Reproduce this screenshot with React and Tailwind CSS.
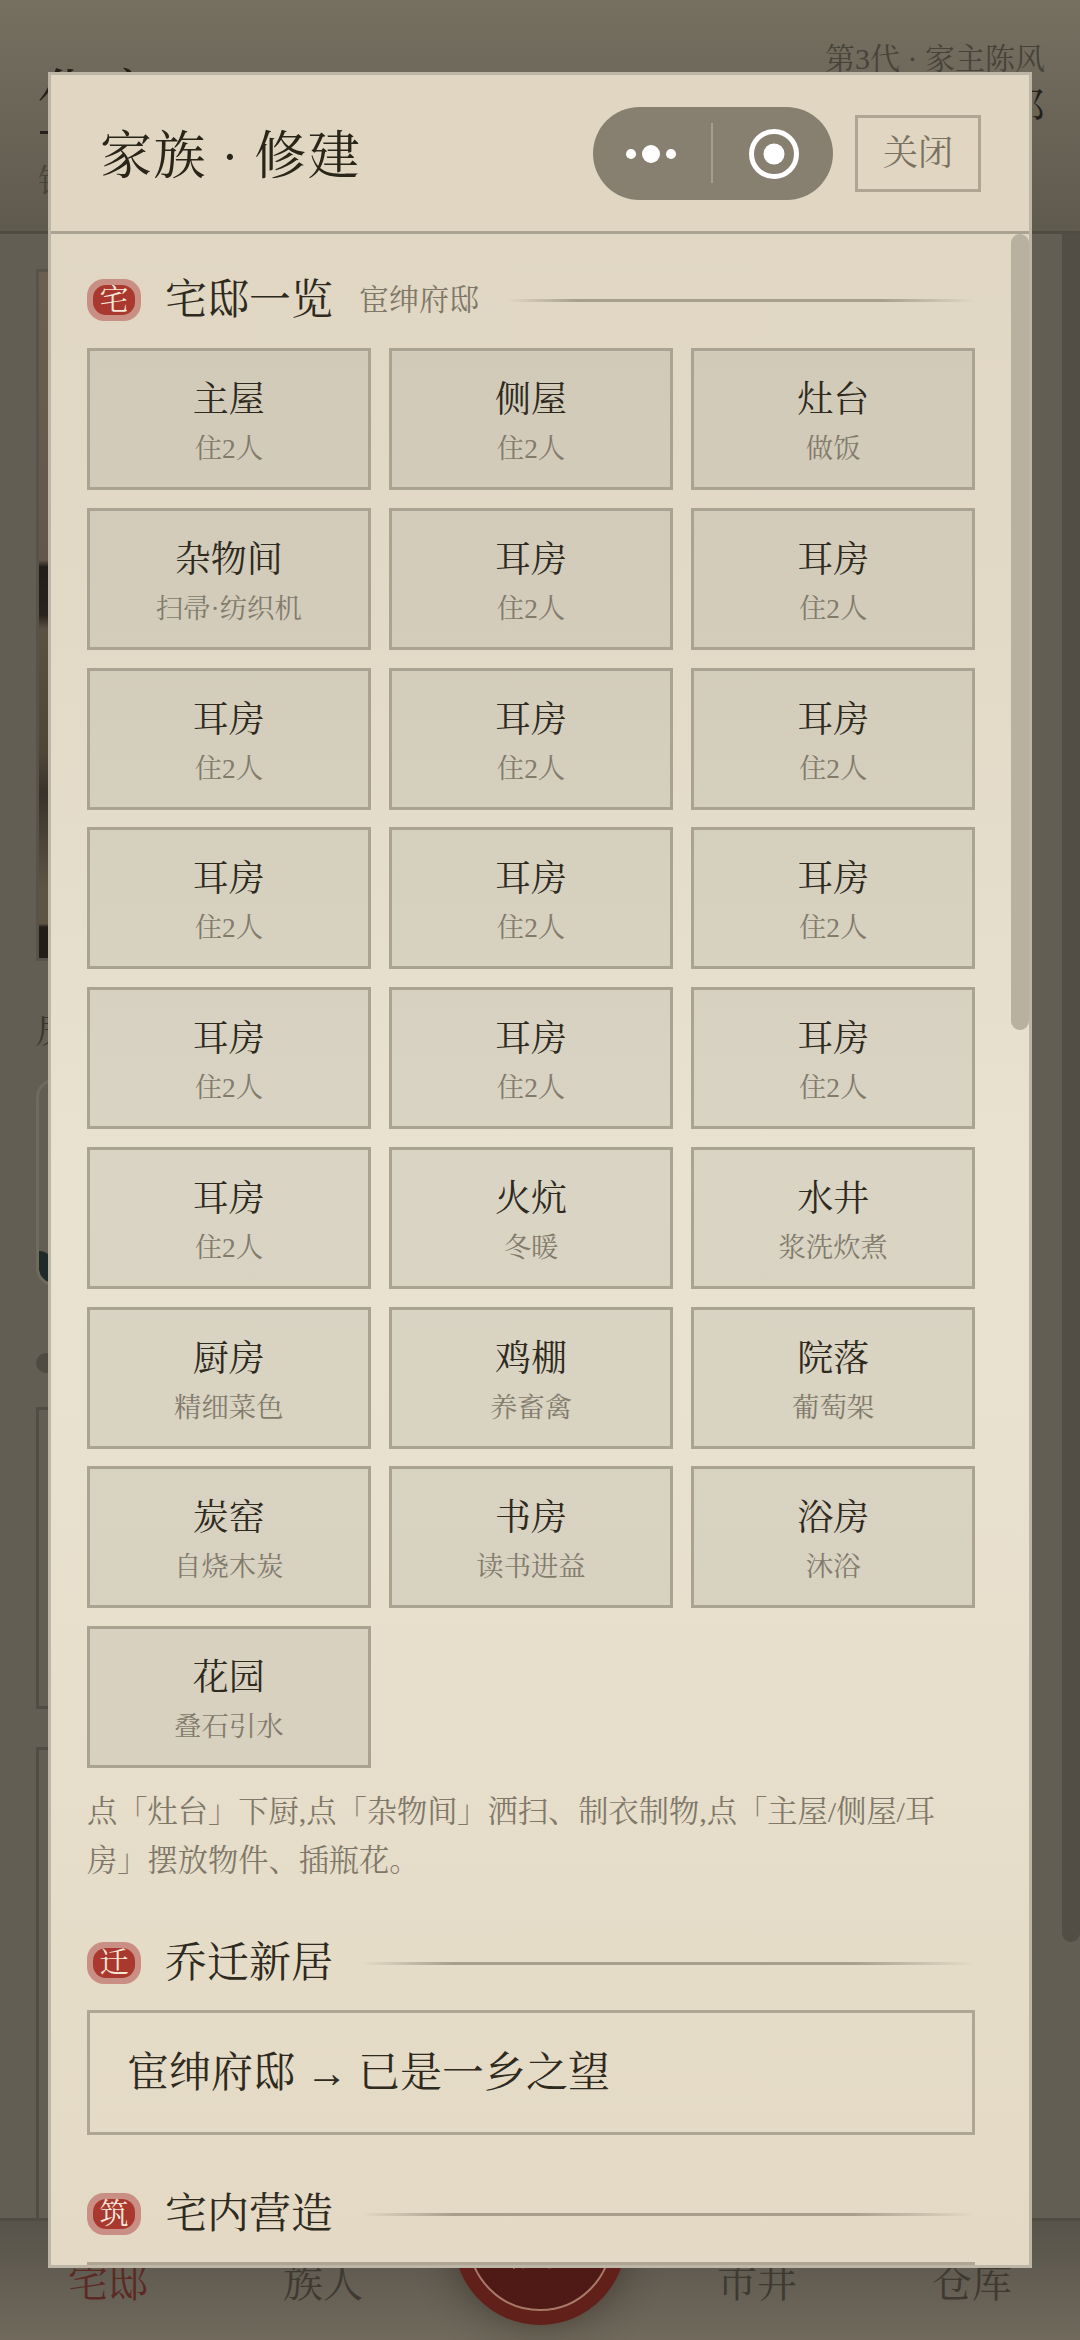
const SERIF = 'font-["Liberation_Serif","Noto_Serif_CJK_SC","Noto_Sans_CJK_SC",serif]';

const rooms = [
  ['主屋', '住2人'], ['侧屋', '住2人'], ['灶台', '做饭'],
  ['杂物间', '扫帚·纺织机'], ['耳房', '住2人'], ['耳房', '住2人'],
  ['耳房', '住2人'], ['耳房', '住2人'], ['耳房', '住2人'],
  ['耳房', '住2人'], ['耳房', '住2人'], ['耳房', '住2人'],
  ['耳房', '住2人'], ['耳房', '住2人'], ['耳房', '住2人'],
  ['耳房', '住2人'], ['火炕', '冬暖'], ['水井', '浆洗炊煮'],
  ['厨房', '精细菜色'], ['鸡棚', '养畜禽'], ['院落', '葡萄架'],
  ['炭窑', '自烧木炭'], ['书房', '读书进益'], ['浴房', '沐浴'],
  ['花园', '叠石引水'],
];

function Seal({ char }) {
  return (
    <div className="w-[54px] h-[42px] shrink-0 rounded-[17px] bg-[#c98f84] flex items-center justify-center">
      <div className="w-[42px] h-[30px] rounded-[13px] bg-[#a9382e] flex items-center justify-center text-[29px] leading-none text-[#f6e8da]">
        {char}
      </div>
    </div>
  );
}

function SectionHead({ seal, title, sub }) {
  return (
    <div className="flex items-center h-[42px]">
      <Seal char={seal} />
      <div className="ml-[24px] text-[42px] leading-none text-[#2f2a20] whitespace-nowrap">{title}</div>
      {sub && <div className="ml-[26px] text-[30px] leading-none text-[#7f7869] whitespace-nowrap">{sub}</div>}
      <div className="flex-1 ml-[28px] h-[3px] bg-[linear-gradient(to_right,transparent,#a89e8c_15%,#a89e8c_80%,transparent)]" />
    </div>
  );
}

function RoomTile({ name, note }) {
  return (
    <div className="h-[142px] pt-[7px] border-[3px] border-[#aba392] bg-[rgba(110,118,105,0.12)] flex flex-col items-center justify-center">
      <div className="text-[36px] leading-[42px] text-[#2f2a20]">{name}</div>
      <div className="mt-[11px] text-[27.36px] leading-[34px] text-[#827b6c]">{note}</div>
    </div>
  );
}

function BackgroundPage() {
  return (
    <div className="w-[1080px] h-[2340px] flex flex-col overflow-hidden bg-[#625e53]">
      <div className="h-[234px] shrink-0 border-b-[3px] border-[#504c42] bg-gradient-to-b from-[#767061] to-[#5f5a4e] relative">
        <div className="absolute left-[38px] top-[69px] text-[60px] leading-none text-[#25201a]">化家</div>
        <div className="absolute left-[40px] top-[131px] w-[10px] h-[3px] bg-[#25201a]" />
        <div className="absolute left-[38px] top-[165px] text-[32px] leading-none text-[#47433a]">钱</div>
        <div className="absolute right-[35px] top-[42px] text-[30px] leading-[34px] text-[#47433a] whitespace-nowrap">第3代 · 家主陈风</div>
        <div className="absolute right-[35px] top-[88px] text-[40px] leading-none text-[#25201a]">邓</div>
      </div>
      <div className="flex-1 flex flex-col pl-[36px] pt-[35px] relative">
        <div className="absolute right-0 top-0 w-[18px] h-[1708px] rounded-b-[9px] bg-[#524e45]" />
        <div className="w-[60px] h-[692px] border-[3px] border-[#57534a] bg-[linear-gradient(to_bottom,#6a5f50_0%,#62574a_42%,#211d18_43%,#29241d_50%,#5b5142_52%,#4f4638_70%,#38332a_76%,#5d5444_90%,#5d5444_95%,#221d18_95.5%)]" />
        <div className="mt-[52px] text-[36px] leading-none text-[#3a362d]">房</div>
        <div className="mt-[30px] w-[60px] h-[207px] rounded-[18px] border-[3px] border-[#6e6a5c] relative overflow-hidden">
          <div className="absolute left-0 bottom-0 w-[14px] h-[32px] rounded-tr-[14px] bg-[#1f2a2a]" />
        </div>
        <div className="mt-[67px] w-[60px] h-[20px] rounded-full bg-[#4e4b42]" />
        <div className="mt-[34px] w-[60px] h-[302px] border-[3px] border-[#514d44]" />
        <div className="mt-[38px] flex-1 w-[60px] border-[3px] border-b-0 border-[#514d44]" />
      </div>
      <div className="h-[122px] shrink-0 border-t-[3px] border-[#504c42] bg-gradient-to-b from-[#57534a] to-[#70695c] flex items-start pl-[68px] pt-[43px] relative">
        <div className="w-[215px] text-[40px] leading-none text-[#5c2a24]">宅邸</div>
        <div className="w-[434px] text-[40px] leading-none text-[#3e3a32]">族人</div>
        <div className="w-[215px] text-[40px] leading-none text-[#3e3a32]">市井</div>
        <div className="text-[40px] leading-none text-[#3e3a32]">仓库</div>
        <div className="absolute left-[454px] top-[-68px] w-[172px] h-[172px] rounded-full bg-[#62201a] shadow-[0_0_40px_rgba(30,20,10,0.45)] flex items-center justify-center">
          <div className="w-[144px] h-[144px] pt-[12px] rounded-full border-2 border-[#a67a68] bg-[#4f1a15] flex items-center justify-center text-[56px] leading-none text-[#b8988a]">房</div>
        </div>
      </div>
    </div>
  );
}

export default function App() {
  return (
    <div className={`relative w-[1080px] h-[2340px] overflow-hidden ${SERIF}`}>
      <BackgroundPage />

      {/* modal over the dimmed page */}
      <div className="absolute left-[48px] top-[72px] w-[984px] h-[2196px] border-[3px] border-[#bdb5a5] bg-[linear-gradient(to_bottom,#e0d6c2_0%,#e2d9c6_25%,#e9e2d1_50%,#e9e1cf_62%,#e3d9c4_100%)] flex flex-col overflow-hidden">
        <div className="h-[159px] shrink-0 border-b-[3px] border-[#aba392] bg-[#e0d6c2] flex items-center pl-[49px] pr-[48px]">
          <div className="flex-1 pt-[8px] text-[52px] leading-none tracking-[1.4px] text-[#2a2519]">家族 · 修建</div>
          <div className="w-[240px] h-[93px] rounded-full bg-[#878071] flex items-center">
            <svg width="118" height="93" viewBox="0 0 118 93" className="shrink-0">
              <circle cx="38" cy="47" r="5" fill="#fff" />
              <circle cx="58" cy="47" r="9" fill="#fff" />
              <circle cx="78" cy="47" r="5" fill="#fff" />
            </svg>
            <div className="w-[2px] h-[60px] bg-[#a59e8f] shrink-0" />
            <svg width="120" height="93" viewBox="0 0 120 93" className="shrink-0">
              <circle cx="61" cy="47" r="22.5" fill="none" stroke="#fff" strokeWidth="5" />
              <circle cx="61" cy="47" r="10.5" fill="#fff" />
            </svg>
          </div>
          <div className="ml-[22px] w-[126px] h-[77px] pt-[1px] border-[3px] border-[#aea593] flex items-center justify-center text-[35px] leading-none text-[#7a7160]">
            关闭
          </div>
        </div>

        <div className="flex-1 relative overflow-hidden">
          <div className="absolute right-0 top-0 w-[18px] h-[796px] rounded-[9px] bg-[#b9b1a0]" />
          <div className="pl-[36px] pr-[54px] pt-[45px]">
            <SectionHead seal="宅" title="宅邸一览" sub="宦绅府邸" />
            <div className="mt-[27px] grid grid-cols-3 gap-x-[18.5px] gap-y-[17.75px]">
              {rooms.map((r, i) => <RoomTile key={i} name={r[0]} note={r[1]} />)}
            </div>
            <p className="mt-[20px] text-[30.24px] leading-[48.6px] text-[#7f7869]">
              点「灶台」下厨,点「杂物间」洒扫、制衣制物,点「主屋/侧屋/耳<br />房」摆放物件、插瓶花。
            </p>

            <div className="mt-[57px]">
              <SectionHead seal="迁" title="乔迁新居" />
            </div>
            <div className="mt-[26px] h-[125px] border-[3px] border-[#aea593] flex items-center pl-[37px] text-[42px] leading-none text-[#2f2a20] whitespace-nowrap">
              宦绅府邸 → 已是一乡之望
            </div>

            <div className="mt-[58px]">
              <SectionHead seal="筑" title="宅内营造" />
            </div>
            <div className="mt-[27px] h-[125px] border-[3px] border-[#aea593]" />
          </div>
        </div>
      </div>
    </div>
  );
}
